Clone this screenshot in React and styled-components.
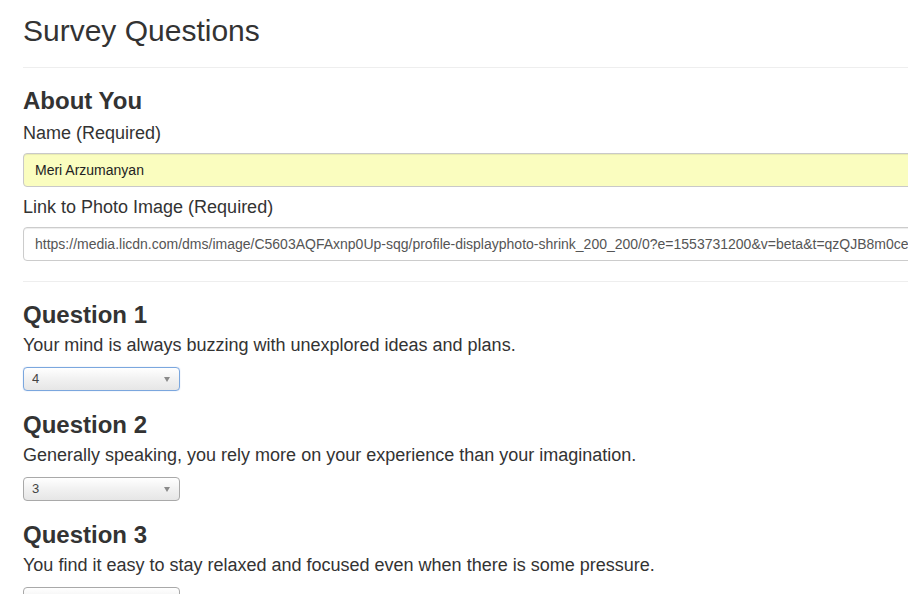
import React from 'react';
import styled, { createGlobalStyle } from 'styled-components';

const GlobalStyle = createGlobalStyle`
  html, body {
    margin: 0;
    padding: 0;
    overflow: hidden;
    background: #fff;
  }
  body {
    font-family: "Liberation Sans", Arial, sans-serif;
    color: #333;
  }
`;

const Page = styled.div`
  width: 1140px;
  padding-left: 23px;
`;

const Header = styled.header`
  margin-top: 14px;
  padding-bottom: 20px;
  border-bottom: 1px solid #eee;
  h1 {
    margin: 0;
    font-size: 30px;
    font-weight: 400;
    line-height: 1.1;
    color: #333;
  }
`;

const Section = styled.section`
  padding-top: 20px;
  padding-bottom: 20px;
  border-bottom: ${(p) => (p.$divider ? '1px solid #eee' : 'none')};
`;

const Heading = styled.h3`
  margin: 0 0 5px;
  font-size: 24px;
  font-weight: 700;
  line-height: 1.1;
  color: #333;
`;

const Label = styled.label`
  display: block;
  margin-top: ${(p) => p.$top || 0}px;
  padding-top: 2px;
  font-size: 18px;
  line-height: 1.42857;
  color: #333;
`;

const TextInput = styled.input`
  display: block;
  box-sizing: border-box;
  width: 100%;
  height: 34px;
  margin-top: 6px;
  padding: 6px 11px;
  font-family: "Liberation Sans", Arial, sans-serif;
  font-size: 14px;
  color: ${(p) => (p.$filled ? '#222' : '#555')};
  background: ${(p) => (p.$filled ? '#fafdbf' : '#fff')};
  border: 1px solid ${(p) => (p.$filled ? '#c9c9c9' : '#ccc')};
  border-radius: 4px;
  box-shadow: inset 0 1px 1px rgba(0, 0, 0, 0.075);
  outline: none;
`;

const Prompt = styled.p`
  margin: 0;
  font-size: 18px;
  line-height: 1.42857;
  color: #333;
`;

const Question = styled.div`
  margin-top: ${(p) => (p.$first ? 20 : 21)}px;
`;

const SelectWrap = styled.div`
  position: relative;
  width: 157px;
  margin-top: 8px;
  &::after {
    content: '';
    position: absolute;
    right: 10px;
    top: 10px;
    border-left: 3.5px solid transparent;
    border-right: 3.5px solid transparent;
    border-top: 5px solid #8a8a8a;
    pointer-events: none;
  }
`;

const Select = styled.select`
  appearance: none;
  display: block;
  box-sizing: border-box;
  width: 157px;
  height: 24px;
  margin: 0;
  padding: 0 8px;
  font-family: "Liberation Sans", Arial, sans-serif;
  font-size: 13px;
  color: #444;
  background: linear-gradient(#ffffff, #f0f0f0 55%, #e6e6e6);
  border: 1px solid ${(p) => (p.$focused ? '#7ba7de' : '#a9a9a9')};
  border-radius: 4px;
  box-shadow: ${(p) => (p.$focused ? '0 0 1px rgba(91, 140, 214, 0.6)' : 'none')};
  outline: none;
`;

const questions = [
  { text: 'Your mind is always buzzing with unexplored ideas and plans.', value: '4', focused: true },
  { text: 'Generally speaking, you rely more on your experience than your imagination.', value: '3' },
  { text: 'You find it easy to stay relaxed and focused even when there is some pressure.', value: '3' },
];

const photoUrl =
  'https://media.licdn.com/dms/image/C5603AQFAxnp0Up-sqg/profile-displayphoto-shrink_200_200/0?e=1553731200&v=beta&t=qzQJB8m0ceXr1';

function App() {
  return (
    <Page>
      <GlobalStyle />
      <Header>
        <h1>Survey Questions</h1>
      </Header>

      <Section $divider>
        <Heading>About You</Heading>
        <Label>Name (Required)</Label>
        <TextInput $filled defaultValue="Meri Arzumanyan" />
        <Label $top={6}>Link to Photo Image (Required)</Label>
        <TextInput defaultValue={photoUrl} />
      </Section>

      {questions.map((q, i) => (
        <Question key={i} $first={i === 0}>
          <Heading>Question {i + 1}</Heading>
          <Prompt>{q.text}</Prompt>
          <SelectWrap>
            <Select $focused={q.focused} defaultValue={q.value}>
              {[1, 2, 3, 4, 5].map((n) => (
                <option key={n} value={String(n)}>
                  {n}
                </option>
              ))}
            </Select>
          </SelectWrap>
        </Question>
      ))}
    </Page>
  );
}

export default App;
